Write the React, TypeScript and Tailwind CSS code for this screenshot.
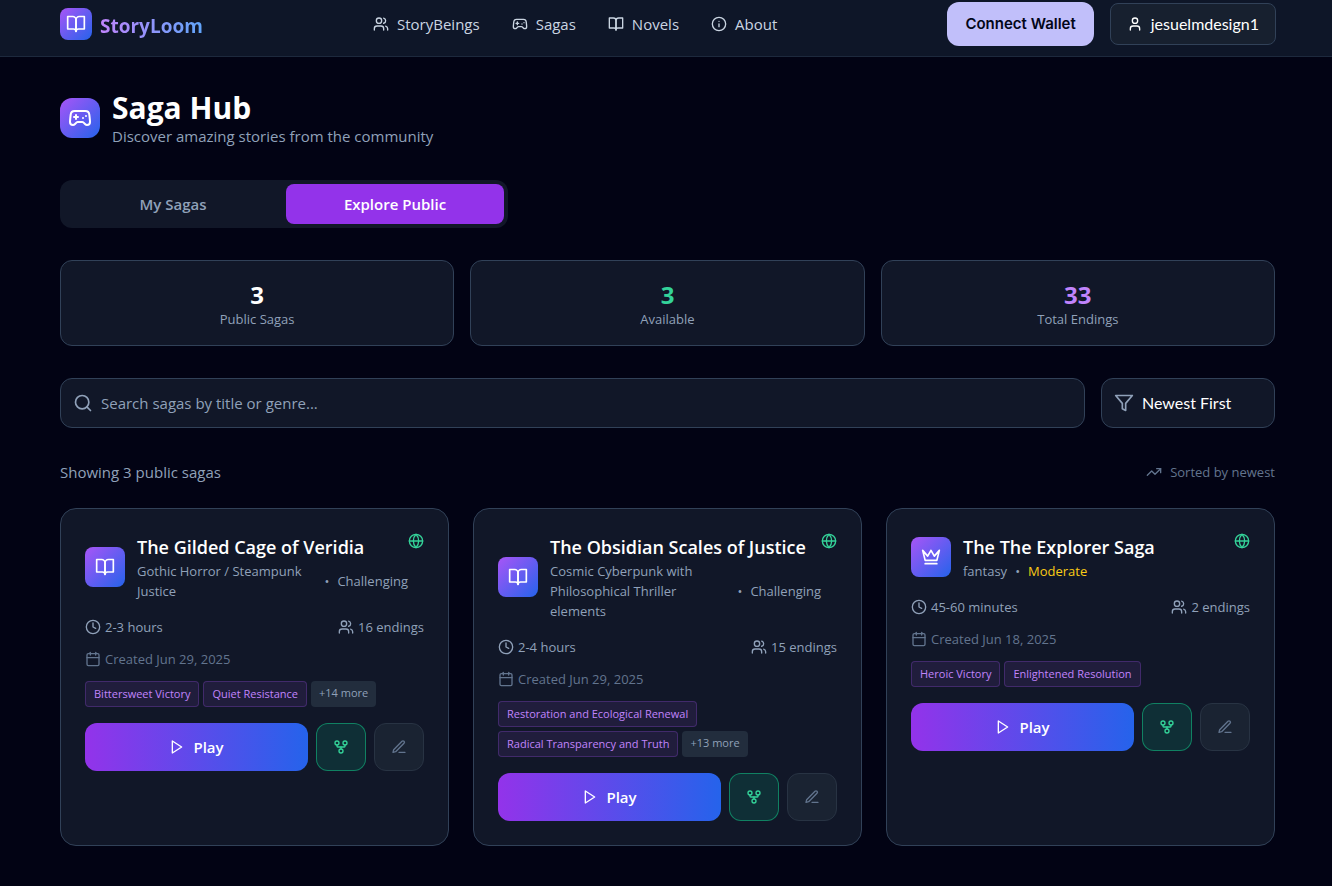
import React, { useState } from "react";
import {
  Calendar,
  Clock,
  Gamepad2,
  GitFork,
  Globe,
  Info,
  Search,
  TrendingUp,
  User,
  Users,
} from "lucide-react";

type IconProps = { className?: string };

const Svg = ({ className, children }: IconProps & { children: React.ReactNode }) => (
  <svg
    viewBox="0 0 24 24"
    fill="none"
    stroke="currentColor"
    strokeWidth={2}
    strokeLinecap="round"
    strokeLinejoin="round"
    aria-hidden="true"
    className={className}
  >
    {children}
  </svg>
);

const BookIcon = ({ className }: IconProps) => (
  <Svg className={className}>
    <path d="M2 3h6a4 4 0 0 1 4 4v14a3 3 0 0 0-3-3H2z" />
    <path d="M22 3h-6a4 4 0 0 0-4 4v14a3 3 0 0 1 3-3h7z" />
  </Svg>
);

const CrownIcon = ({ className }: IconProps) => (
  <Svg className={className}>
    <path d="m2 4 3 12h14l3-12-6 7-4-7-4 7-6-7zm3 16h14" />
  </Svg>
);

const FilterIcon = ({ className }: IconProps) => (
  <Svg className={className}>
    <polygon points="22 3 2 3 10 12.46 10 19 14 21 14 12.46 22 3" />
  </Svg>
);

const PlayIcon = ({ className }: IconProps) => (
  <Svg className={className}>
    <polygon points="5 3 19 12 5 21 5 3" />
  </Svg>
);

const EditIcon = ({ className }: IconProps) => (
  <Svg className={className}>
    <path d="M12 20h9" />
    <path d="M16.5 3.5a2.12 2.12 0 0 1 3 3L7 19l-4 1 1-4Z" />
  </Svg>
);

const navLinks = [
  { text: "StoryBeings", link: "#storybeings", Icon: Users },
  { text: "Sagas", link: "#sagas", Icon: Gamepad2 },
  { text: "Novels", link: "#novels", Icon: BookIcon },
  { text: "About", link: "#about", Icon: Info },
];

const stats = [
  { value: 3, label: "Public Sagas", color: "text-white" },
  { value: 3, label: "Available", color: "text-[#34d399]" },
  { value: 33, label: "Total Endings", color: "text-[#c084fc]" },
];

const sagas = [
  {
    title: "The Gilded Cage of Veridia",
    genre: "Gothic Horror / Steampunk Justice",
    difficulty: "Challenging",
    difficultyColor: "text-slate-400",
    time: "2-3 hours",
    endings: 16,
    created: "Jun 29, 2025",
    tags: ["Bittersweet Victory", "Quiet Resistance"],
    Icon: BookIcon,
  },
  {
    title: "The Obsidian Scales of Justice",
    genre: "Cosmic Cyberpunk with Philosophical Thriller elements",
    difficulty: "Challenging",
    difficultyColor: "text-slate-400",
    time: "2-4 hours",
    endings: 15,
    created: "Jun 29, 2025",
    tags: ["Restoration and Ecological Renewal", "Radical Transparency and Truth"],
    Icon: BookIcon,
  },
  {
    title: "The The Explorer Saga",
    genre: "fantasy",
    difficulty: "Moderate",
    difficultyColor: "text-[#facc15]",
    time: "45-60 minutes",
    endings: 2,
    created: "Jun 18, 2025",
    tags: ["Heroic Victory", "Enlightened Resolution"],
    Icon: CrownIcon,
  },
];

const Header = () => (
  <header className="flex items-center justify-between border-b border-slate-800 bg-[#0e1628] pt-0.5 pr-14 pb-2.5 pl-15">
    <a href="#home" className="flex items-center gap-2">
      <span className="flex size-8 items-center justify-center rounded-lg bg-linear-to-br/srgb from-[#a855f7] to-[#2563eb]">
        <BookIcon className="size-5 text-white" />
      </span>
      <span className="bg-linear-to-r/srgb from-[#c084fc] to-[#60a5fa] bg-clip-text pt-1 text-[19px] leading-7 font-bold text-transparent">
        StoryLoom
      </span>
    </a>
    <nav className="flex items-center gap-8">
      {navLinks.map(({ text, link, Icon }) => (
        <a key={text} href={link} className="flex items-center gap-2 text-slate-300">
          <Icon className="size-4" />
          <span>{text}</span>
        </a>
      ))}
    </nav>
    <div className="flex items-center gap-4">
      <button className="h-11 rounded-xl bg-[#c1bffa] px-[18px] font-[Inter,sans-serif] font-semibold text-slate-950">
        Connect Wallet
      </button>
      <button className="flex items-center gap-2 rounded-lg border border-slate-700 bg-[#17202f] px-4 py-2 font-[Lato,sans-serif] text-base text-white">
        <User className="size-4" />
        <span>jesuelmdesign1</span>
      </button>
    </div>
  </header>
);

const SagaCard = ({ saga }: { saga: (typeof sagas)[number] }) => {
  const { title, genre, difficulty, difficultyColor, time, endings, created, tags, Icon } = saga;
  const more = endings - tags.length;

  return (
    <article className="rounded-2xl border border-slate-700 bg-[#111728] p-6">
      <div className="mb-4 flex items-start justify-between">
        <div className="flex items-center gap-3">
          <div className="flex size-10 shrink-0 items-center justify-center rounded-lg bg-linear-to-br/srgb from-[#a855f7] to-[#2563eb]">
            <Icon className="size-5 text-white" />
          </div>
          <div>
            <h3 className="text-lg font-semibold text-white">{title}</h3>
            <div className="flex items-center gap-2 text-[13px] leading-5 text-slate-400">
              <span>{genre}</span>
              <span>•</span>
              <span className={difficultyColor}>{difficulty}</span>
            </div>
          </div>
        </div>
        <Globe className="size-4 shrink-0 text-[#34d399]" />
      </div>
      <div className="mb-3 flex items-center justify-between text-[13px] leading-5 text-slate-400">
        <div className="flex items-center gap-1">
          <Clock className="size-4" />
          <span>{time}</span>
        </div>
        <div className="flex items-center gap-1">
          <Users className="size-4" />
          <span>{endings} endings</span>
        </div>
      </div>
      <div className="mb-3 flex items-center gap-1 text-[13px] leading-5 text-slate-500">
        <Calendar className="size-4" />
        <span>Created {created}</span>
      </div>
      <div className="mb-4 flex flex-wrap gap-1 text-[11px] leading-4 font-medium">
        {tags.map((tag) => (
          <span
            key={tag}
            className="rounded border border-[#a855f7]/25 bg-[#a855f7]/10 px-2 py-1 text-[#c084fc]"
          >
            {tag}
          </span>
        ))}
        {more > 0 && (
          <span className="rounded bg-[#222d3d] px-2 py-1 text-slate-400">+{more} more</span>
        )}
      </div>
      <div className="flex gap-2">
        <button className="flex flex-1 items-center justify-center gap-2 rounded-xl bg-linear-to-r/srgb from-[#9333ea] to-[#2563eb] py-3 font-semibold text-white">
          <PlayIcon className="size-4" />
          <span>Play</span>
        </button>
        <button
          aria-label="Fork saga"
          className="rounded-xl border border-[#10b981]/60 bg-[#0f2f36] px-4 text-[#34d399]"
        >
          <GitFork className="size-4" />
        </button>
        <button
          aria-label="Edit saga"
          className="rounded-xl border border-[#283343] bg-[#1a2332] px-4 text-slate-500"
        >
          <EditIcon className="size-4" />
        </button>
      </div>
    </article>
  );
};

const App = () => {
  const [tab, setTab] = useState("Explore Public");

  return (
    <div className="min-h-screen bg-[#020314] font-[Open_Sans,sans-serif] text-[15px] leading-6">
      <Header />
      <main className="pt-[31px] pr-[57px] pb-10 pl-15">
        <div className="mb-8 flex items-center gap-3">
          <div className="flex size-10 items-center justify-center rounded-xl bg-linear-to-br/srgb from-[#a855f7] to-[#2563eb]">
            <Gamepad2 className="size-6 text-white" />
          </div>
          <div>
            <h1 className="pt-1 text-3xl leading-8 font-bold text-white">Saga Hub</h1>
            <p className="text-slate-400">Discover amazing stories from the community</p>
          </div>
        </div>

        <div className="mb-8 flex max-w-md gap-1 rounded-xl bg-[#111728] p-1">
          {["My Sagas", "Explore Public"].map((name) => (
            <button
              key={name}
              onClick={() => setTab(name)}
              className={
                tab === name
                  ? "flex-1 rounded-lg bg-[#9333ea] py-2 font-semibold text-white"
                  : "flex-1 rounded-lg py-2 font-semibold text-slate-400"
              }
            >
              {name}
            </button>
          ))}
        </div>

        <div className="mb-8 grid grid-cols-3 gap-4">
          {stats.map(({ value, label, color }) => (
            <div key={label} className="rounded-xl border border-slate-700 bg-[#111728] p-4 text-center">
              <div className={`pt-1 text-2xl leading-7 font-bold ${color}`}>{value}</div>
              <div className="text-[13px] leading-5 text-slate-400">{label}</div>
            </div>
          ))}
        </div>

        <div className="mb-8 flex gap-4">
          <label className="flex flex-1 items-center gap-2 rounded-xl border border-slate-700 bg-[#111728] px-3 text-slate-400">
            <Search className="size-5" />
            <input
              type="text"
              aria-label="Search sagas"
              placeholder="Search sagas by title or genre..."
              className="flex-1 py-3 text-white outline-none placeholder:text-slate-400"
            />
          </label>
          <label className="flex w-[174px] items-center gap-2 rounded-xl border border-slate-700 bg-[#111728] px-3 text-slate-400">
            <FilterIcon className="size-5" />
            <select
              aria-label="Sort sagas"
              className="flex-1 appearance-none py-3 font-[Lato,sans-serif] text-base text-white outline-none"
            >
              <option>Newest First</option>
              <option>Oldest First</option>
            </select>
          </label>
        </div>

        <div className="mb-6 flex items-center justify-between">
          <p className="text-slate-400">Showing 3 public sagas</p>
          <div className="flex items-center gap-2 text-[13px] leading-5 text-slate-500">
            <TrendingUp className="size-4" />
            <span>Sorted by newest</span>
          </div>
        </div>

        <div className="grid grid-cols-3 gap-6">
          {sagas.map((saga) => (
            <SagaCard key={saga.title} saga={saga} />
          ))}
        </div>
      </main>
    </div>
  );
};

export default App;
